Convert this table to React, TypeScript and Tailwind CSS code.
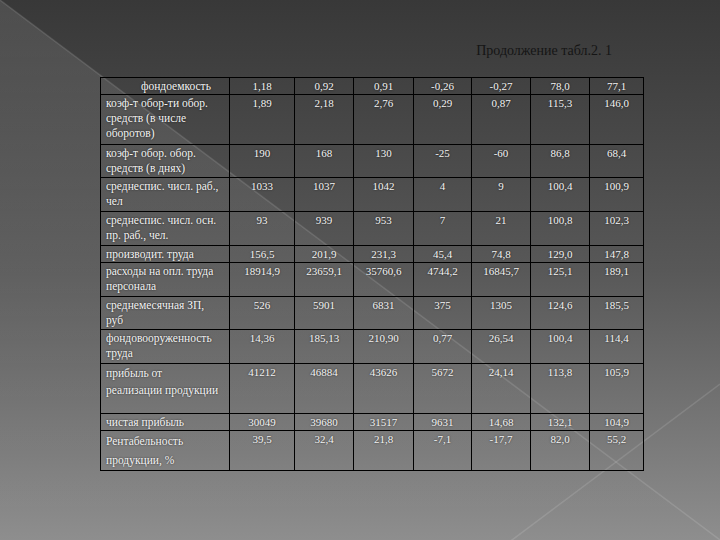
import React from "react"

type Row = { label: React.ReactNode; values: string[]; h: string; indent?: boolean }

const rows: Row[] = [
  { label: "фондоемкость", values: ["1,18", "0,92", "0,91", "-0,26", "-0,27", "78,0", "77,1"], h: "h-[17px]", indent: true },
  {
    label: (
      <>
        коэф-т обор-ти обор.
        <br />
        средств (в числе
        <br />
        оборотов)
      </>
    ),
    values: ["1,89", "2,18", "2,76", "0,29", "0,87", "115,3", "146,0"],
    h: "h-[50px]",
  },
  {
    label: (
      <>
        коэф-т обор. обор.
        <br />
        средств (в днях)
      </>
    ),
    values: ["190", "168", "130", "-25", "-60", "86,8", "68,4"],
    h: "h-[33px]",
  },
  {
    label: (
      <>
        среднеспис. числ. раб.,
        <br />
        чел
      </>
    ),
    values: ["1033", "1037", "1042", "4", "9", "100,4", "100,9"],
    h: "h-[34px]",
  },
  {
    label: (
      <>
        среднеспис. числ. осн.
        <br />
        пр. раб., чел.
      </>
    ),
    values: ["93", "939", "953", "7", "21", "100,8", "102,3"],
    h: "h-[34px]",
  },
  { label: "производит. труда", values: ["156,5", "201,9", "231,3", "45,4", "74,8", "129,0", "147,8"], h: "h-[16px]" },
  {
    label: (
      <>
        расходы на опл. труда
        <br />
        персонала
      </>
    ),
    values: ["18914,9", "23659,1", "35760,6", "4744,2", "16845,7", "125,1", "189,1"],
    h: "h-[34px]",
  },
  {
    label: (
      <>
        среднемесячная ЗП,
        <br />
        руб
      </>
    ),
    values: ["526", "5901", "6831", "375", "1305", "124,6", "185,5"],
    h: "h-[33px]",
  },
  {
    label: (
      <>
        фондовооруженность
        <br />
        труда
      </>
    ),
    values: ["14,36", "185,13", "210,90", "0,77", "26,54", "100,4", "114,4"],
    h: "h-[34px]",
  },
  {
    label: (
      <span className="leading-[17px]">
        прибыль от
        <br />
        реализации продукции
      </span>
    ),
    values: ["41212", "46884", "43626", "5672", "24,14", "113,8", "105,9"],
    h: "h-[50px]",
  },
  { label: "чистая прибыль", values: ["30049", "39680", "31517", "9631", "14,68", "132,1", "104,9"], h: "h-[16px]" },
  {
    label: (
      <span className="leading-[19px]">
        Рентабельность
        <br />
        продукции, %
      </span>
    ),
    values: ["39,5", "32,4", "21,8", "-7,1", "-17,7", "82,0", "55,2"],
    h: "h-[39px]",
  },
]

const colWidths = ["w-[129px]", "w-[65px]", "w-[59px]", "w-[60px]", "w-[58px]", "w-[59px]", "w-[59px]", "w-[54px]"]

function Backdrop() {
  return (
    <svg className="absolute inset-0" width="720" height="540" viewBox="0 0 720 540">
      <defs>
        <linearGradient id="tri" x1="0" y1="0" x2="0" y2="1">
          <stop offset="0" stopColor="#ffffff" stopOpacity="0.11" />
          <stop offset="0.7" stopColor="#ffffff" stopOpacity="0.02" />
          <stop offset="1" stopColor="#ffffff" stopOpacity="0" />
        </linearGradient>
      </defs>
      <polygon points="0,0 720,540 0,540" fill="url(#tri)" />
      <line x1="0" y1="0" x2="720" y2="540" stroke="#ffffff" strokeOpacity="0.12" strokeWidth="1.5" />
      <line x1="720" y1="384" x2="508" y2="543" stroke="#ffffff" strokeOpacity="0.12" strokeWidth="1.5" />
    </svg>
  )
}

export default function App() {
  return (
    <div className="relative w-[720px] h-[540px] overflow-hidden bg-gradient-to-b from-[#383838] via-[#585858] to-[#8e8e8e] font-['Liberation_Serif','Times_New_Roman',serif]">
      <Backdrop />
      <div className="relative flex flex-col pt-[42px]">
        <div className="flex justify-end pr-[108px]">
          <p className="font-['Liberation_Serif',serif] text-[14px] leading-[17px] text-[#151515]">Продолжение табл.2. 1</p>
        </div>

        <table className="ml-[100px] mt-[18px] border-collapse table-fixed w-[543px] font-['Liberation_Serif',serif] text-[11px] leading-[15px] text-[#f4f4f4] [text-shadow:0_0_2px_rgba(0,0,0,0.7)]">
          <colgroup>
            {colWidths.map((w, i) => (
              <col key={i} className={w} />
            ))}
          </colgroup>
          <tbody>
            {rows.map((row, i) => (
              <tr key={i} className={row.h}>
                <td className={`border border-black align-top pt-px pr-0 text-[11.5px] ${row.indent ? "pl-[40px]" : "pl-[5px]"}`}>
                  {row.label}
                </td>
                {row.values.map((v, j) => (
                  <td key={j} className="border border-black align-top pt-px text-center">
                    {v}
                  </td>
                ))}
              </tr>
            ))}
          </tbody>
        </table>
      </div>
    </div>
  )
}
